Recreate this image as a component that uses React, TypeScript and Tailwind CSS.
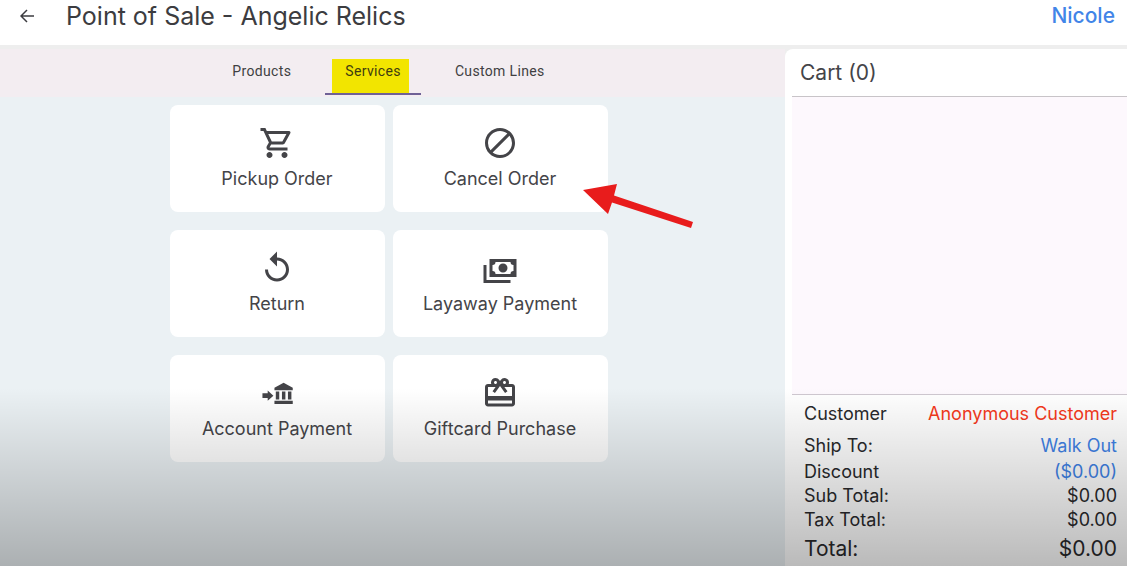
import React from 'react';
import { MdBlock, MdOutlineCardGiftcard, MdOutlineShoppingCart, MdReplay } from 'react-icons/md';
import clsx from 'clsx';

interface Service {
  label: string;
  icon: React.ReactNode;
  pointer?: boolean;
}

interface SummaryRow {
  label: string;
  value: string;
  rowClass: string;
  valueClass?: string;
  action?: boolean;
}

const CashMultipleIcon = () => (
  <svg viewBox="0 0 24 24" className="size-9" fill="currentColor" aria-hidden="true">
    <path d="M5 6H23V18H5V6M14 9A3 3 0 0 1 17 12A3 3 0 0 1 14 15A3 3 0 0 1 11 12A3 3 0 0 1 14 9M9 8A2 2 0 0 1 7 10V14A2 2 0 0 1 9 16H19A2 2 0 0 1 21 14V10A2 2 0 0 1 19 8H9M1 10H3V20H19V22H1V10Z" />
  </svg>
);

const BankInIcon = () => (
  <svg viewBox="0 0 24 24" className="size-9" fill="currentColor" aria-hidden="true">
    <path d="M2.3 12.2H5.8V10.4L9.6 13.8L5.8 17.2V15.4H2.3Z" />
    <path d="M16.4 5.1L22.5 8.5V10.2H10.3V8.5Z" />
    <path d="M11.2 11H13.5V16.4H11.2ZM15.3 11H17.6V16.4H15.3ZM19.3 11H21.6V16.4H19.3ZM10.3 17.2H22.5V19.4H10.3Z" />
  </svg>
);

const services: Service[] = [
  { label: 'Pickup Order', icon: <MdOutlineShoppingCart className="size-9" /> },
  { label: 'Cancel Order', icon: <MdBlock className="size-9" />, pointer: true },
  { label: 'Return', icon: <MdReplay className="size-9" /> },
  { label: 'Layaway Payment', icon: <CashMultipleIcon /> },
  { label: 'Account Payment', icon: <BankInIcon /> },
  { label: 'Giftcard Purchase', icon: <MdOutlineCardGiftcard className="size-9" /> }
];

const tabs = ['Products', 'Services', 'Custom Lines'];

const summary: SummaryRow[] = [
  { label: 'Customer', value: 'Anonymous Customer', rowClass: 'h-9 text-lg', valueClass: 'text-[#f5391c]', action: true },
  { label: 'Ship To:', value: 'Walk Out', rowClass: 'h-7 text-lg', valueClass: 'text-[#3f82e6]', action: true },
  { label: 'Discount', value: '($0.00)', rowClass: 'h-6 text-lg', valueClass: 'text-[#3f82e6]', action: true },
  { label: 'Sub Total:', value: '$0.00', rowClass: 'h-6 text-lg' },
  { label: 'Tax Total:', value: '$0.00', rowClass: 'h-6 text-lg' },
  { label: 'Total:', value: '$0.00', rowClass: 'h-[34px] text-[21px]' }
];

const ServiceCard: React.FC<{ service: Service }> = ({ service }) => (
  <div className="relative">
    <button
      type="button"
      className="flex w-full flex-col items-center rounded-lg bg-white pt-5 pb-[19px] text-lg leading-7 text-[#444448]"
    >
      {service.icon}
      <span className="mt-1">{service.label}</span>
    </button>
    {service.pointer && (
      <svg
        viewBox="0 0 110 46"
        className="pointer-events-none absolute top-[79px] left-[190px] z-10 h-[46px] w-[110px]"
        fill="#e81c1c"
        aria-hidden="true"
      >
        <path d="M0 6L34 0L31 11.5L110 38L108 44L29 18.5L25 30Z" />
      </svg>
    )}
  </div>
);

const App: React.FC = () => (
  <div className="relative flex min-h-screen flex-col bg-[#ebf1f4] font-['Inter',sans-serif]">
    <header className="flex h-[45px] items-start justify-between bg-white pr-3 pl-5">
      <div className="flex items-center">
        <button type="button" aria-label="Back" className="text-[#3c3c40]">
          <svg viewBox="0 0 14 14" className="size-[14px]" fill="none" stroke="currentColor" strokeWidth="1.5" aria-hidden="true">
            <path d="M14 7H1M7 1L1 7L7 13" />
          </svg>
        </button>
        <h1 className="ml-8 text-[25px] leading-8 text-[#3c3c40]">Point of Sale - Angelic Relics</h1>
      </div>
      <a href="#account" className="text-[21px] leading-8 font-medium text-[#4285e8]">Nicole</a>
    </header>

    <div className="flex flex-1">
      <main className="flex-1">
        <nav className="flex h-[52px] justify-center gap-3.5 border-t-4 border-[#eeeeee] bg-[#f3edf1] pr-2 font-['Roboto',sans-serif] text-sm tracking-wide text-[#3f3f42]">
          {tabs.map((tab) => (
            <button
              key={tab}
              type="button"
              className={clsx(
                'relative h-[46px] border-b-2 px-5',
                tab === 'Services' ? 'border-[#6f6196] text-[#3f3c10]' : 'border-transparent'
              )}
            >
              {tab === 'Services' && <span className="absolute top-[10px] right-3 bottom-0 left-[7px] bg-[#f2e500]" />}
              <span className="relative">{tab}</span>
            </button>
          ))}
        </nav>
        <div className="pt-2 pr-2">
          <div className="mx-auto grid max-w-[438px] grid-cols-2 gap-x-2 gap-y-[18px]">
            {services.map((service) => (
              <ServiceCard key={service.label} service={service} />
            ))}
          </div>
        </div>
      </main>

      <aside className="flex w-[342px] flex-col border-t-4 border-[#eeeeee] bg-[#eeeeee]">
        <div className="flex flex-1 flex-col rounded-tl-lg bg-white pl-[7px]">
          <h2 className="border-b border-[#c8c4c8] pl-2 text-[21px] leading-[47px] text-[#444448]">Cart (0)</h2>
          <div className="flex-1 bg-[#fdf8fd]" />
          <dl className="border-t border-[#cfc8d0] pt-px pr-[10px] pl-3 text-[#29292c]">
            {summary.map((row) => (
              <div key={row.label} className={clsx('flex items-center justify-between', row.rowClass)}>
                <dt>{row.label}</dt>
                <dd className={row.valueClass}>
                  {row.action ? <button type="button">{row.value}</button> : row.value}
                </dd>
              </div>
            ))}
          </dl>
        </div>
      </aside>
    </div>

    <div className="pointer-events-none absolute inset-x-0 bottom-0 h-[178px] bg-linear-to-b from-transparent to-black/27" />
  </div>
);

export default App;
